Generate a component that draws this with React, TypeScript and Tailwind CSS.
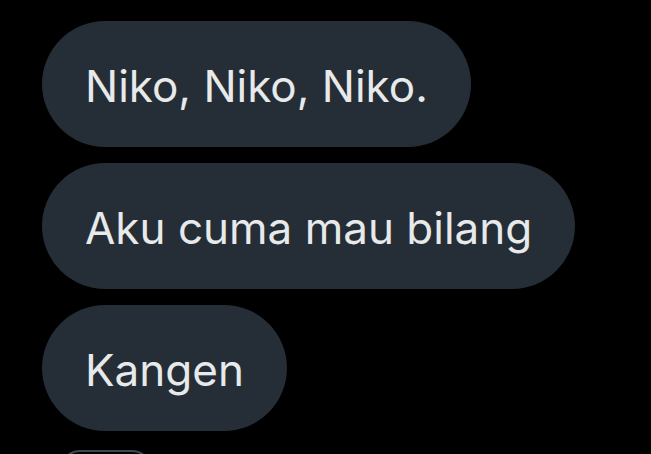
export default function App() {
  const messages = ['Niko, Niko, Niko.', 'Aku cuma mau bilang', 'Kangen']

  return (
    <div className="h-[454px] w-[651px] overflow-hidden bg-black pl-[42px] pt-[21px] font-['Inter',sans-serif]">
      <div className="flex flex-col items-start gap-4">
        {messages.map((m) => (
          <div
            key={m}
            className="flex h-[126px] items-center rounded-full bg-[#252e36] px-[43px] pt-[4px] text-[44px] text-[#e7e9ea]"
          >
            {m}
          </div>
        ))}
        {/* next item, cut off at the bottom */}
        <div className="ml-[18px] mt-[3px] h-[40px] w-[92px] rounded-t-[20px] border-2 border-[#3e4850]" />
      </div>
    </div>
  )
}
